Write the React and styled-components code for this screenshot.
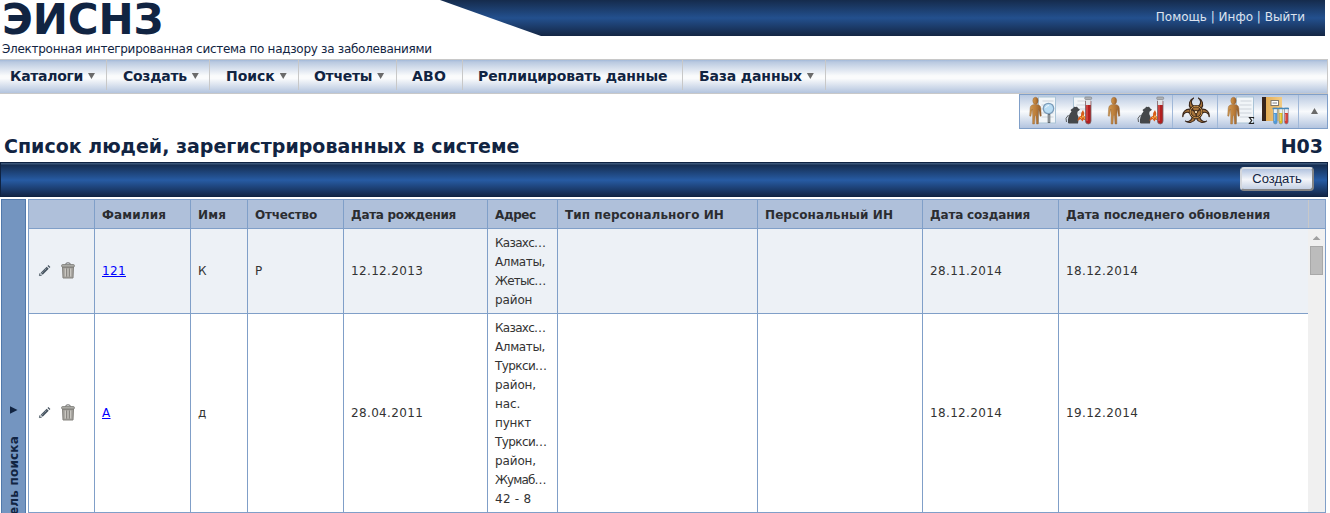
import React from "react";
import styled, { createGlobalStyle, css } from "styled-components";

const Global = createGlobalStyle`
  * { box-sizing: border-box; }
  body { margin: 0; background: #fff; overflow: hidden; font-family: "DejaVu Sans", Verdana, sans-serif; }
`;

const navy = "#112442";
const line = "#809fc8";

const Page = styled.div`
  width: 1330px;
  height: 513px;
  overflow: hidden;
  display: flex;
  flex-direction: column;
  font-size: 12px;
  color: #333;
`;
const T = styled.span`
  letter-spacing: ${(p) => p.$ls || 0}px;
  white-space: nowrap;
`;

const Header = styled.header`
  display: flex;
  height: 59px;
  flex: none;
  color: ${navy};
`;
const Brand = styled.div`
  width: 440px;
  padding-left: 2px;
`;
const BrandName = styled.h1`
  margin: 0;
  font-size: 42px;
  line-height: 40px;
  height: 42px;
  letter-spacing: -0.1px;
`;
const BrandSub = styled.div`
  font-size: 12px;
  line-height: 14px;
  letter-spacing: -0.28px;
  white-space: nowrap;
`;
const Banner = styled.div`
  width: 885px;
  height: 36px;
  padding: 8px 20px 0 0;
  text-align: right;
  line-height: 18px;
  color: #dde3ee;
  background: linear-gradient(#152b4c 0, #23508e 50%, #142644 100%);
  clip-path: polygon(0 0, 100% 0, 100% 100%, 101px 100%);
`;

const Menu = styled.nav`
  display: flex;
  flex: none;
  width: 1328px;
  height: 35px;
  border: solid #c8c8c8;
  border-width: 1px 1px 1px 0;
  background: linear-gradient(#a3b9d9 0, #b9c9e0 6%, #fafbfc 48%, #fafbfc 56%, #b3c4de 100%);
`;
const MenuItem = styled.div`
  display: flex;
  width: ${(p) => p.$w}px;
  height: 30px;
  padding-left: ${(p) => p.$pad}px;
  border-right: 1px solid #c8c8c8;
  font-size: 14px;
  font-weight: bold;
  line-height: 32px;
  color: ${navy};
`;
const Caret = styled.i`
  width: 7px;
  height: 6px;
  margin: 13px 0 0 5px;
  background: #6a6a6a;
  clip-path: ${(p) => (p.$up ? "polygon(50% 0, 100% 100%, 0 100%)" : "polygon(0 0, 100% 0, 50% 100%)")};
`;

const ToolRow = styled.div`
  display: flex;
  justify-content: flex-end;
  flex: none;
  width: 1328px;
  height: 35px;
`;
const Tools = styled.div`
  display: flex;
  width: 309px;
  border: 1px solid #809fc8;
  background: linear-gradient(#b9c9e1, #f8fafc 50%, #b3c4df);
`;
const ToolGroup = styled.div`
  display: flex;
  gap: ${(p) => p.$gap || 8}px;
  padding: 1px ${(p) => p.$end || 7}px 0 9px;
  border-right: 1px solid #a0b8d8;
`;
const ToolArrow = styled.div`
  padding-left: 12px;
  ${Caret} { display: block; margin: 13px 0 0; }
`;

const TitleRow = styled.div`
  display: flex;
  justify-content: space-between;
  flex: none;
  width: 1323px;
  height: 33px;
  padding-left: 4px;
  font-size: 19px;
  font-weight: bold;
  line-height: 34px;
  color: ${navy};
`;
const Bar = styled.div`
  display: flex;
  justify-content: flex-end;
  flex: none;
  width: 1328px;
  height: 35px;
  padding: 4px 13px 0 0;
  border: 1px solid #0f2342;
  background: linear-gradient(#3a5578 0, #3a5578 1px, #152d50 2px, #275ba3 52%, #132647 100%);
`;
const Button = styled.button`
  width: 74px;
  height: 24px;
  padding: 0;
  border: 2px solid;
  border-color: #dcdfe4 #858585 #858585 #d4d7dc;
  border-radius: 4px;
  background: linear-gradient(#b3c4e0, #f4f6fa 52%, #c4d0e3);
  font: 13px/20px "Liberation Sans", Arial, sans-serif;
  color: ${navy};
`;

const Content = styled.main`
  display: flex;
  flex: none;
  gap: 2px;
  height: 330px;
  padding: 2px 0 0 1px;
`;
const SidePanel = styled.aside`
  width: 25px;
  border: 1px solid #5179ab;
  background: #7495c0;
  display: flex;
  flex-direction: column;
  align-items: center;
  color: ${navy};
`;
const SideArrow = styled.i`
  flex: none;
  width: 8px;
  height: 8px;
  margin-top: 206px;
  background: ${navy};
  clip-path: polygon(0 0, 100% 50%, 0 100%);
`;
const SideLabel = styled.div`
  flex: none;
  margin-top: 22px;
  writing-mode: vertical-rl;
  transform: rotate(180deg);
  font-weight: bold;
  letter-spacing: 0.2px;
  line-height: 18px;
  white-space: nowrap;
`;
const Grid = styled.div`
  width: 1298px;
  height: 314px;
  display: flex;
  flex-direction: column;
  border: solid ${line};
  border-width: 1px 1px 1px 0;
`;
const cols = css`
  display: grid;
  grid-template-columns: 66px 96px 57px 96px 144px 70px 200px 165px 136px 250px;
`;
const HeadRow = styled.div`
  ${cols}
  grid-template-columns: 66px 96px 57px 96px 144px 70px 200px 165px 136px 250px 17px;
  flex: none;
  height: 29px;
  background: #afc0da;
  border-bottom: 1px solid ${line};
  font-weight: bold;
  color: #2b2d31;
`;
const Cell = styled.div`
  display: flex;
  align-items: center;
  padding-left: 7px;
  border-left: 1px solid ${line};
`;
const HeadCell = styled(Cell)`
  padding-top: 1px;
`;
const ScrollHead = styled.div`
  border-left: 1px solid #c8c8c8;
`;
const Body = styled.div`
  display: flex;
  flex: 1;
  min-height: 0;
`;
const Rows = styled.div`
  width: 1280px;
`;
const Row = styled.div`
  ${cols}
  background: ${(p) => (p.$alt ? "#edf1f6" : "#fff")};
  & + & { border-top: 1px solid ${line}; }
`;
const Actions = styled(Cell)`
  padding: 0 0 1px 9px;
  gap: 9px;
`;
const Address = styled(Cell)`
  flex-direction: column;
  align-items: flex-start;
  padding-top: 5px;
  padding-bottom: 3px;
  line-height: 19px;
`;
const Link = styled.a`
  color: #0000ff;
  text-decoration: underline;
`;
const Scroll = styled.div`
  display: flex;
  flex-direction: column;
  align-items: center;
  width: 17px;
  background: #f0f0f0;
`;
const ScrollUp = styled.i`
  width: 8px;
  height: 4px;
  margin-top: 7px;
  background: #a0a0a0;
  clip-path: polygon(50% 0, 100% 100%, 0 100%);
`;
const Thumb = styled.div`
  width: 13px;
  height: 29px;
  margin-top: 6px;
  background: #bcbcbc;
  border: 1px solid #a8a8a8;
`;

const Icon = ({ children }) => (
  <svg width="28" height="30" viewBox="0 0 28 30">
    <defs>
      <linearGradient id="skin" x1="0" x2="1"><stop offset="0" stopColor="#cf9850" /><stop offset=".5" stopColor="#bd7f3b" /><stop offset="1" stopColor="#935c2b" /></linearGradient>
      <linearGradient id="folder" x1="0" x2="1"><stop offset="0" stopColor="#e0a64c" /><stop offset="1" stopColor="#f3cc84" /></linearGradient>
    </defs>
    {children}
  </svg>
);
const Man = ({ x = 0 }) => (
  <g transform={`translate(${x + 0.5} 0) scale(.92 1)`} fill="url(#skin)" stroke="#8e5f30" strokeWidth=".4">
    <path d="M3 9Q6.500 7.500 10 9Q12 9.500 12.300 12L12.800 20L11.500 20.300L10 13L9.600 19L9.600 28H7.600L6.900 19.500H6.100L5.400 28H3.400L3.400 19L3 13L1.500 20.300L.2 20L.7 12Q1 9.500 3 9Z" />
    <ellipse cx="6.500" cy="4.700" rx="2.900" ry="3.500" />
  </g>
);
const Paper = ({ x, y = 1, w = 17, h = 26 }) => (
  <g>
    <rect x={x} y={y} width={w} height={h} fill="#f1f5f8" stroke="#a9c3d6" />
    <path d={`M${x + 4} ${y + 4}h${w - 6}M${x + 3} ${y + 8}h${w - 5}M${x + 3} ${y + 12}h${w - 5}M${x + 3} ${y + 16}h${w - 5}M${x + 3} ${y + 20}h${w - 5}`} stroke="#cdd3da" />
  </g>
);
const RatAndTube = () => (
  <g>
    <path d="M1.500 26Q-.5 22 3.500 19" stroke="#5b5e60" fill="none" />
    <path d="M3 27C2.500 22 4 18.500 6.500 15.500L5.500 14Q7 12.500 8.500 12Q8.500 10 10.500 11Q12.500 10 12.800 12L15 13.800L12.500 15.700Q11.500 18 13.500 21Q13.500 25 13 27.500H4Z" fill="#44474a" />
    <path d="M12.500 25Q13 20.500 16 20Q16 16 18 14Q20 17 19 20Q21.500 21 22 25L18.500 23.500L17.500 25.500L15.500 23Z" fill="#d75b18" />
    <path d="M15 21L16.500 22.500L18 19.500L20 23" stroke="#f5af48" fill="none" />
    <path d="M20.500 5H26V25Q26 28 23.300 28Q20.500 28 20.500 25Z" fill="#b22020" stroke="#75666b" strokeWidth=".8" />
    <rect x="20.900" y="3" width="4.700" height="6" fill="#dfe3e6" />
    <rect x="19.700" y="1" width="7" height="2.500" rx="1" fill="#aeb1b5" stroke="#787c82" strokeWidth=".6" />
    <path d="M22 9V25" stroke="#e6625c" />
  </g>
);
const Biohazard = () => (
  <g transform="translate(0 -.5)">
    {[0, 120, 240].map((a) => (
      <path
        key={a}
        transform={`rotate(${a} 14 16.500)`}
        d="M11.800 2.600A6.700 6.700 0 1 0 16.200 2.600A4.600 4.600 0 1 1 11.800 2.600Z"
        fill="#a8743a" stroke="#3a281d" strokeWidth="1.100"
      />
    ))}
    <circle cx="14" cy="16.500" r="5.800" fill="none" stroke="#3f2b1c" strokeWidth="2.200" />
    <circle cx="14" cy="16.500" r="5.800" fill="none" stroke="#c89149" strokeWidth="1" />
    <circle cx="14" cy="16.500" r="1.700" fill="#e5d2b2" stroke="#54381e" />
  </g>
);
const FolderTubes = () => (
  <g>
    <path d="M1 1H21V25H1Z" fill="url(#folder)" />
    <path d="M1 1H5V25H1Z" fill="#38251c" />
    <rect x="10" y="4.500" width="7.500" height="5" fill="#fff" stroke="#80786c" />
    <path d="M11.500 7H16" stroke="#808080" />
    {[["#4c9bdc", 12.500], ["#e2bf24", 18], ["#d63a2f", 23.500]].map(([c, x]) => (
      <g key={c}>
        <path d={`M${x} 12h3.700v14q0 2-1.850 2t-1.850-2Z`} fill={c} stroke="#6d8ba8" strokeWidth=".6" />
        <path d={`M${x + 0.3} 12h3.100v5h-3.100Z`} fill="#e9f1f6" />
        <path d={`M${x + 1.2} 18v7`} stroke="#fff" strokeOpacity=".4" />
      </g>
    ))}
    <path d="M11.500 12.500H28" stroke="#4688ba" strokeWidth="1.400" />
  </g>
);
const Pencil = () => (
  <svg width="14" height="16" viewBox="0 0 14 16">
    <path d="M2.700 9.700L8.700 3.700L10.700 5.700L4.700 11.700Z" fill="#46535f" />
    <path d="M3.900 10L9 4.900" stroke="#9ba6af" strokeDasharray="1.200 1" />
    <path d="M9.500 2.900L10.400 2L12.400 4L11.500 4.900Z" fill="#46535f" />
    <path d="M2 10.200L1.400 12.600L3.800 12.100" fill="#d7dde1" stroke="#46535f" strokeWidth=".9" />
  </svg>
);
const Trash = () => (
  <svg width="14" height="17" viewBox="0 0 14 17">
    <path d="M4.500 2.500Q4.500 .8 7 .8T9.500 2.500" fill="none" stroke="#666" />
    <path d="M1.500 5H12.500L12 16H2Z" fill="#a3a19c" stroke="#85837e" />
    <rect x=".6" y="2.600" width="12.800" height="2.400" rx="1" fill="#b0afaa" stroke="#74746f" strokeWidth=".8" />
    <path d="M4.300 6.500V14.500M7 6.500V14.500M9.700 6.500V14.500" stroke="#d2d0ca" />
    <path d="M5.600 6.500V14.500M8.400 6.500V14.500" stroke="#7d7b76" strokeWidth=".8" />
  </svg>
);

const menu = [
  ["Каталоги", 107, -0.31, 10, true],
  ["Создать", 103, -0.28, 16, true],
  ["Поиск", 89, -0.05, 16, true],
  ["Отчеты", 98, -0.3, 15, true],
  ["АВО", 66, 0.2, 15],
  ["Реплицировать данные", 220, -0.12, 15],
  ["База данных", 143, -0.14, 16, true],
];
const heads = [
  [""], ["Фамилия", 0.13], ["Имя", 0.15], ["Отчество", -0.18], ["Дата рождения", -0.31], ["Адрес", -0.4],
  ["Тип персонального ИН", 0.07], ["Персональный ИН", 0.09], ["Дата создания", -0.2], ["Дата последнего обновления", -0.05],
];
const people = [
  {
    last: "121", first: "К", middle: "Р", born: "12.12.2013", created: "28.11.2014", updated: "18.12.2014",
    address: [["Казахс…", -0.7], ["Алматы,", -0.37], ["Жетыс…", -0.8], ["район", -0.13]],
  },
  {
    last: "А", first: "д", middle: "", born: "28.04.2011", created: "18.12.2014", updated: "19.12.2014",
    address: [["Казахс…", -0.7], ["Алматы,", -0.37], ["Туркси…", -0.6], ["район,", -0.13], ["нас.", -0.13], ["пункт", -0.2], ["Туркси…", -0.6], ["район,", -0.13], ["Жумаб…", -0.85], ["42 - 8", 0.25]],
  },
];

export default function App() {
  return (
    <Page>
      <Global />
      <Header>
        <Brand>
          <BrandName>ЭИСНЗ</BrandName>
          <BrandSub>Электронная интегрированная система по надзору за заболеваниями</BrandSub>
        </Brand>
        <Banner>Помощь | Инфо | Выйти</Banner>
      </Header>
      <Menu>
        {menu.map(([text, w, ls, pad, caret]) => (
          <MenuItem key={text} $w={w} $pad={pad}>
            <T $ls={ls}>{text}</T>
            {caret && <Caret />}
          </MenuItem>
        ))}
      </Menu>
      <ToolRow>
        <Tools>
          <ToolGroup>
            <Icon>
              <Paper x={9.5} />
              <Man />
              <path d="M20 17V27" stroke="#62686d" strokeWidth="2.600" />
              <path d="M20 19V26" stroke="#aeb5bb" />
              <circle cx="19.500" cy="12.500" r="5.200" fill="#b9dcf3" stroke="#7d9dba" strokeWidth="1.300" />
              <path d="M16.500 12Q17 9.500 20 9.500" fill="none" stroke="#eef8ff" />
            </Icon>
            <Icon><Paper x={8.5} w={16} h={22} /><RatAndTube /></Icon>
            <Icon><Man x={6.5} /></Icon>
            <Icon><RatAndTube /></Icon>
          </ToolGroup>
          <ToolGroup><Icon><Biohazard /></Icon></ToolGroup>
          <ToolGroup $gap={6} $end={9}>
            <Icon>
              <Paper x={9.5} />
              <Man />
              <path d="M26.500 22.500V21.500H22.500L24.700 24.500L22.500 27.500H26.500V26.500" fill="none" stroke="#222" strokeWidth="1.200" />
            </Icon>
            <Icon><FolderTubes /></Icon>
          </ToolGroup>
          <ToolArrow><Caret $up /></ToolArrow>
        </Tools>
      </ToolRow>
      <TitleRow>
        <T>Список людей, зарегистрированных в системе</T>
        <T>H03</T>
      </TitleRow>
      <Bar><Button>Создать</Button></Bar>
      <Content>
        <SidePanel>
          <SideArrow />
          <SideLabel>Панель поиска</SideLabel>
        </SidePanel>
        <Grid>
          <HeadRow>
            {heads.map(([text, ls], i) => (
              <HeadCell key={i}><T $ls={ls}>{text}</T></HeadCell>
            ))}
            <ScrollHead />
          </HeadRow>
          <Body>
            <Rows>
              {people.map((p, i) => (
                <Row key={p.last} $alt={i === 0}>
                  <Actions><Pencil /><Trash /></Actions>
                  <Cell><Link><T $ls={0.35}>{p.last}</T></Link></Cell>
                  <Cell>{p.first}</Cell>
                  <Cell>{p.middle}</Cell>
                  <Cell><T $ls={0.35}>{p.born}</T></Cell>
                  <Address>{p.address.map(([text, ls], j) => <T key={j} $ls={ls}>{text}</T>)}</Address>
                  <Cell />
                  <Cell />
                  <Cell><T $ls={0.35}>{p.created}</T></Cell>
                  <Cell><T $ls={0.35}>{p.updated}</T></Cell>
                </Row>
              ))}
            </Rows>
            <Scroll><ScrollUp /><Thumb /></Scroll>
          </Body>
        </Grid>
      </Content>
    </Page>
  );
}
